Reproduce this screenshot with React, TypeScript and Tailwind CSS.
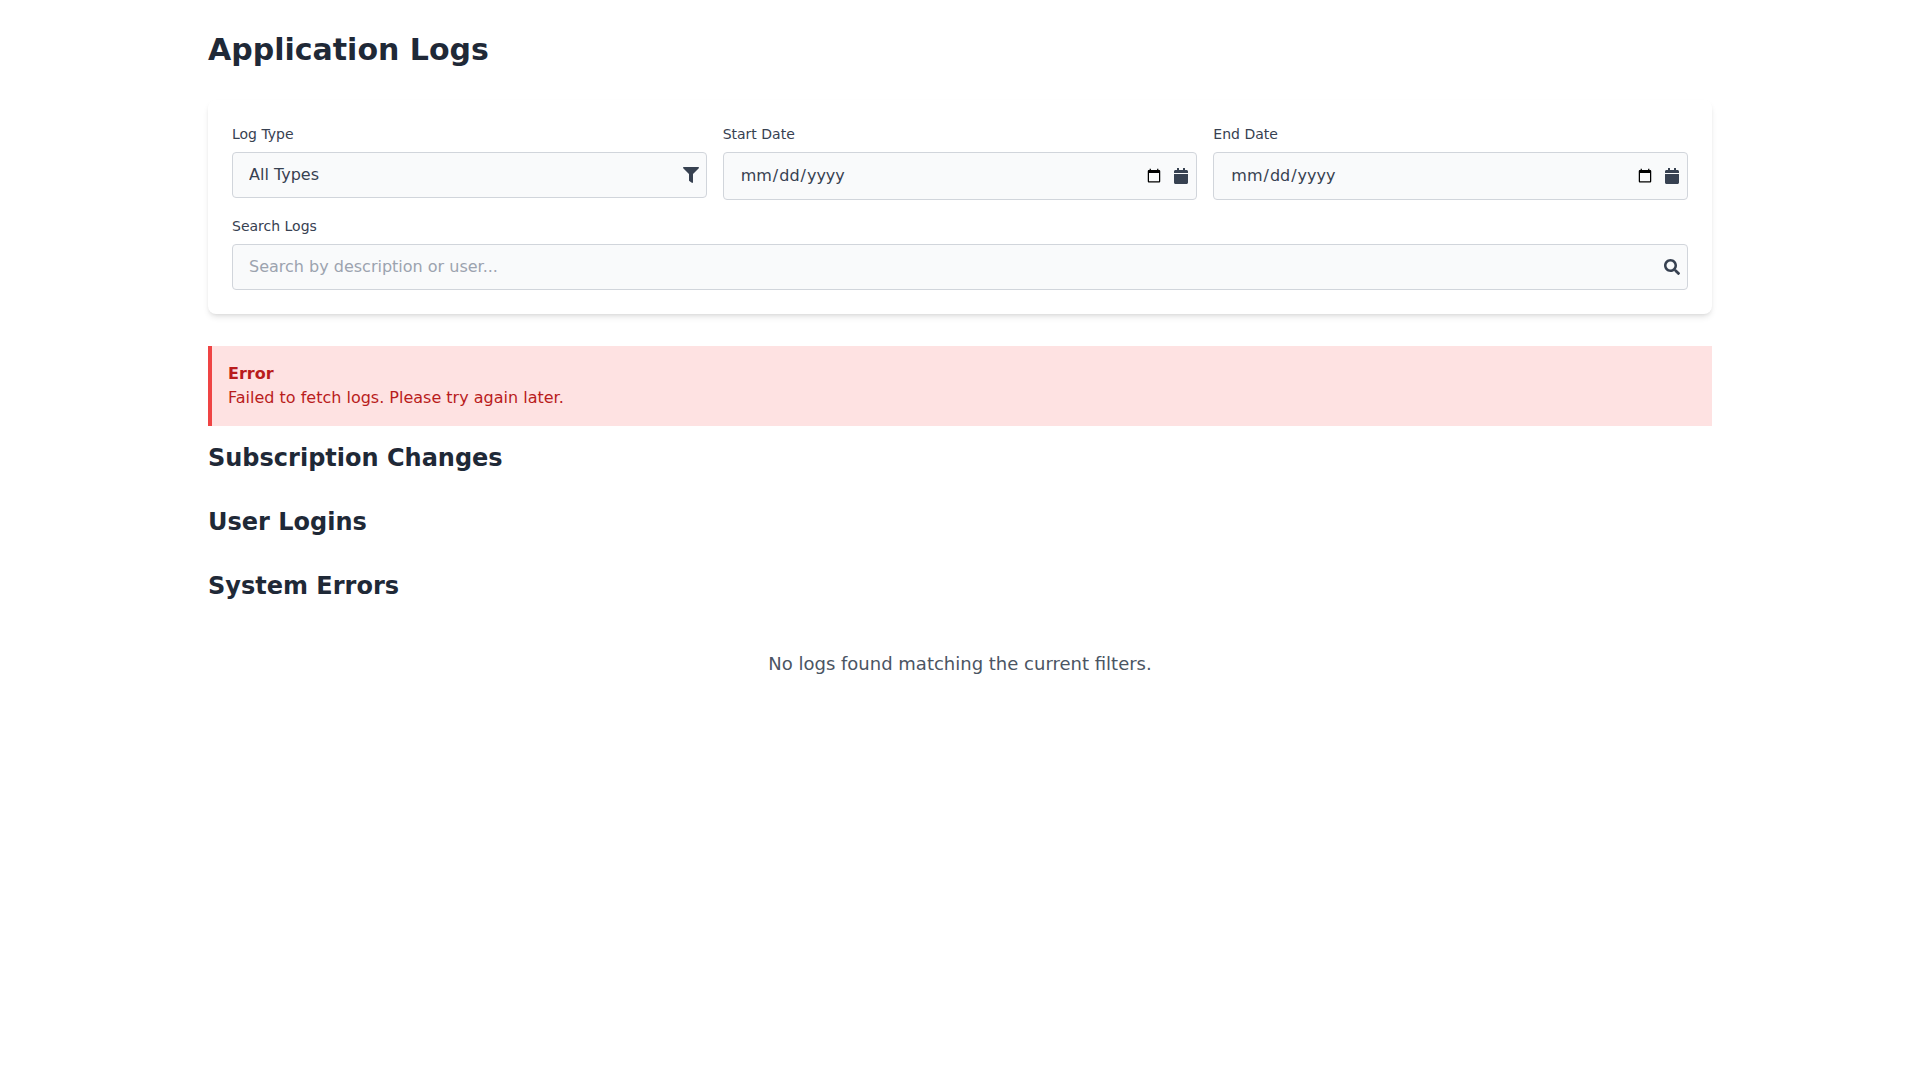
import React from 'react';
import { FaCalendar, FaFilter, FaSearch } from 'react-icons/fa';

const label = 'block text-sm font-medium text-[#374151] mb-2';
const fieldBase =
  'block appearance-none w-full bg-[#f9fafb] border border-[#d1d5db] text-[#374151] py-3 pl-4 pr-8 rounded leading-tight';
const icon = 'pointer-events-none absolute inset-y-0 right-0 flex items-center px-2 text-[#374151]';
const heading = 'text-2xl font-bold mb-8 text-[#1f2937]';

function DateField({ name }: { name: string }) {
  return (
    <div>
      <label className={label}>{name}</label>
      <div className="relative">
        <input type="date" className={fieldBase + ' [&::-webkit-datetime-edit]:py-px'} />
        <div className={icon}>
          <FaCalendar />
        </div>
      </div>
    </div>
  );
}

export default function App() {
  return (
    <div className="max-w-[1536px] mx-auto px-4 py-8 [font-family:'DejaVu_Sans',sans-serif]">
      <h1 className="text-3xl font-bold mb-8 text-[#1f2937]">Application Logs</h1>
      <div className="bg-white shadow-md rounded-lg p-6 mb-8">
        <div className="grid grid-cols-3 gap-4 mb-4">
          <div>
            <label className={label}>Log Type</label>
            <div className="relative">
              <select className={fieldBase}>
                <option>All Types</option>
              </select>
              <div className={icon}>
                <FaFilter />
              </div>
            </div>
          </div>
          <DateField name="Start Date" />
          <DateField name="End Date" />
        </div>
        <label className={label}>Search Logs</label>
        <div className="relative">
          <input
            type="text"
            placeholder="Search by description or user..."
            className={fieldBase + ' placeholder:text-[#9ca3af]'}
          />
          <div className={icon}>
            <FaSearch />
          </div>
        </div>
      </div>
      <div className="bg-[#fee2e2] border-l-4 border-[#ef4444] text-[#b91c1c] p-4 mb-4" role="alert">
        <p className="font-bold">Error</p>
        <p>Failed to fetch logs. Please try again later.</p>
      </div>
      <h2 className={heading}>Subscription Changes</h2>
      <h2 className={heading}>User Logins</h2>
      <h2 className={heading}>System Errors</h2>
      <p className="text-center text-lg text-[#4b5563] mt-12">No logs found matching the current filters.</p>
    </div>
  );
}
